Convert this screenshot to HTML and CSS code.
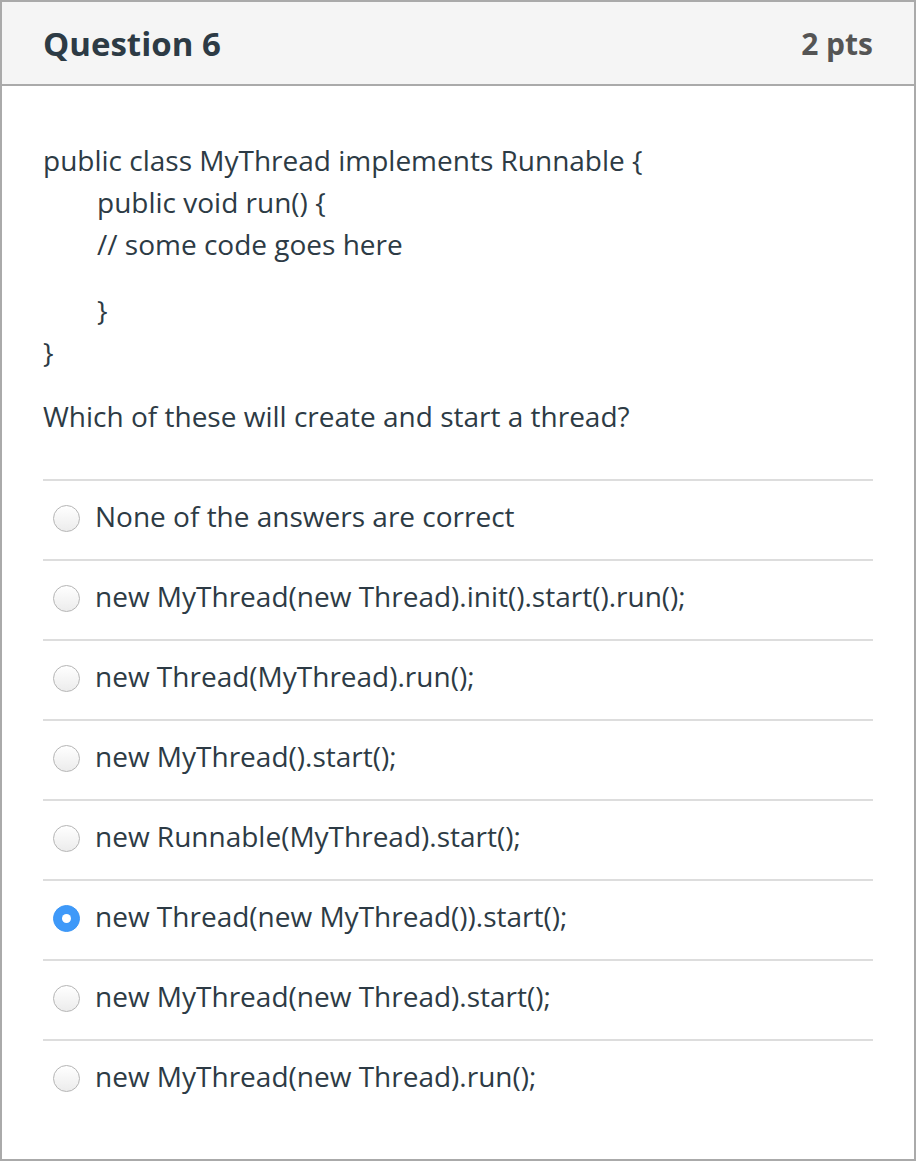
FILE: index.html
```html
<!DOCTYPE html>
<html>
<head>
<meta charset="utf-8">
<link rel="stylesheet" href="styles.css">
</head>
<body>
<div class="card">
  <div class="header">
    <h2 class="title">Question 6</h2>
    <div class="pts">2 pts</div>
  </div>
  <div class="content">
    <div class="question">
      <p class="code">public class MyThread implements Runnable {<br><span class="ind">public void run() {</span><br><span class="ind">// some code goes here</span></p>
      <p class="code"><span class="ind">}</span><br>}</p>
      <p class="ask">Which of these will create and start a thread?</p>
    </div>
    <div class="answers">
      <label class="answer"><span class="radio"></span><span class="atext">None of the answers are correct</span></label>
      <label class="answer"><span class="radio"></span><span class="atext">new MyThread(new Thread).init().start().run();</span></label>
      <label class="answer"><span class="radio"></span><span class="atext">new Thread(MyThread).run();</span></label>
      <label class="answer"><span class="radio"></span><span class="atext">new MyThread().start();</span></label>
      <label class="answer"><span class="radio"></span><span class="atext">new Runnable(MyThread).start();</span></label>
      <label class="answer"><span class="radio checked"></span><span class="atext">new Thread(new MyThread()).start();</span></label>
      <label class="answer"><span class="radio"></span><span class="atext">new MyThread(new Thread).start();</span></label>
      <label class="answer"><span class="radio"></span><span class="atext">new MyThread(new Thread).run();</span></label>
    </div>
  </div>
</div>
</body>
</html>
```
FILE: styles.css
```css
* { box-sizing: border-box; }
html, body { margin: 0; padding: 0; background: #fff; }
body {
  font-family: "Open Sans", "Liberation Sans", sans-serif;
  color: #2d3b45;
  width: 918px;
  height: 1162px;
}
.card {
  width: 916px;
  height: 1161px;
  border: 2px solid #aaaaaa;
  display: flex;
  flex-direction: column;
}
.header {
  height: 84px;
  background: #f5f5f5;
  border-bottom: 2px solid #aaaaaa;
  display: flex;
  align-items: center;
  justify-content: space-between;
  padding: 0 41px;
}
.title {
  margin: 0;
  font-size: 33px;
  font-weight: 700;
  color: #2d3b45;
}
.pts {
  font-size: 30px;
  font-weight: 700;
  color: #555555;
}
.content {
  padding: 53px 41px 0 41px;
}
.question p {
  margin: 0 0 24px 0;
  font-size: 28px;
  line-height: 42px;
}
.ind { padding-left: 54px; }
.question .ask { margin-top: -2px; margin-bottom: 0; }
.answers {
  margin-top: 42px;
}
.answer {
  display: flex;
  align-items: center;
  height: 80px;
  border-top: 2px solid #dddddd;
  font-size: 28px;
  padding-left: 10px;
  padding-bottom: 8px;
}
.radio {
  width: 27px;
  height: 27px;
  border-radius: 50%;
  border: 1px solid #b5b5b5;
  background: linear-gradient(#ffffff, #ececec);
  flex: none;
  margin-right: 15px;
  margin-top: 5px;
  display: flex;
  align-items: center;
  justify-content: center;
}
.radio.checked {
  border-color: #3b96f6;
  background: #3e99f9;
}
.radio.checked::after {
  content: "";
  width: 9px;
  height: 9px;
  border-radius: 50%;
  background: #fff;
}
.atext { line-height: 42px; }
```
